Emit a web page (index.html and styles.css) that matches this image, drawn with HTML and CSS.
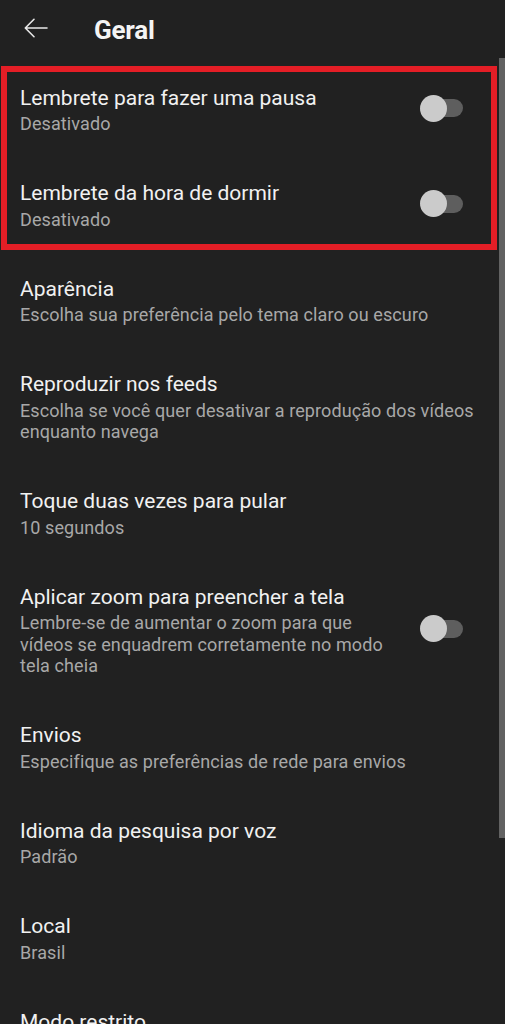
FILE: index.html
```html
<!DOCTYPE html>
<html lang="pt-BR">
<head>
<meta charset="utf-8">
<title>Geral</title>
<link rel="stylesheet" href="styles.css">
</head>
<body>
<div class="screen">
  <header class="appbar">
    <svg class="back" width="24" height="20" viewBox="0 0 24 20" aria-hidden="true">
      <path d="M23 10H1.5M10 1.3L1.3 10L10 18.7" fill="none" stroke="#e8e8e8" stroke-width="1.6" stroke-linecap="round" stroke-linejoin="round"/>
    </svg>
    <h1 class="title">Geral</h1>
  </header>

  <main class="list">
    <div class="highlight">
      <div class="item">
        <div class="text">
          <div class="label">Lembrete para fazer uma pausa</div>
          <div class="sub">Desativado</div>
        </div>
        <div class="switch"><span class="thumb"></span></div>
      </div>
      <div class="item">
        <div class="text">
          <div class="label">Lembrete da hora de dormir</div>
          <div class="sub">Desativado</div>
        </div>
        <div class="switch"><span class="thumb"></span></div>
      </div>
    </div>

    <div class="item">
      <div class="text">
        <div class="label">Aparência</div>
        <div class="sub">Escolha sua preferência pelo tema claro ou escuro</div>
      </div>
    </div>
    <div class="item">
      <div class="text">
        <div class="label">Reproduzir nos feeds</div>
        <div class="sub">Escolha se você quer desativar a reprodução dos vídeos enquanto navega</div>
      </div>
    </div>
    <div class="item">
      <div class="text">
        <div class="label">Toque duas vezes para pular</div>
        <div class="sub">10 segundos</div>
      </div>
    </div>
    <div class="item">
      <div class="text">
        <div class="label">Aplicar zoom para preencher a tela</div>
        <div class="sub">Lembre-se de aumentar o zoom para que vídeos se enquadrem corretamente no modo tela cheia</div>
      </div>
      <div class="switch"><span class="thumb"></span></div>
    </div>
    <div class="item">
      <div class="text">
        <div class="label">Envios</div>
        <div class="sub">Especifique as preferências de rede para envios</div>
      </div>
    </div>
    <div class="item">
      <div class="text">
        <div class="label">Idioma da pesquisa por voz</div>
        <div class="sub">Padrão</div>
      </div>
    </div>
    <div class="item">
      <div class="text">
        <div class="label">Local</div>
        <div class="sub">Brasil</div>
      </div>
    </div>
    <div class="item">
      <div class="text">
        <div class="label">Modo restrito</div>
        <div class="sub">Desativado</div>
      </div>
    </div>
  </main>

  <div class="scrollbar"></div>
</div>
</body>
</html>
```

FILE: styles.css
```css
* { box-sizing: border-box; }

html, body {
  margin: 0;
  padding: 0;
  background: #212121;
}

body {
  font-family: Roboto, "Noto Sans", "Liberation Sans", sans-serif;
  color: #f1f1f1;
  overflow: hidden;
}

.screen {
  position: relative;
  width: 505px;
  height: 1024px;
  overflow: hidden;
  background: #212121;
}

.appbar {
  height: 62px;
  display: flex;
  align-items: flex-start;
  padding: 18px 0 0 24px;
}

.back {
  display: block;
}

.title {
  margin: -6px 0 0 46px;
  font-size: 26px;
  line-height: 36px;
  font-weight: 700;
  color: #f4f4f4;
  letter-spacing: -0.2px;
}

.list {
  display: flex;
  flex-direction: column;
}

.highlight {
  position: relative;
  display: flex;
  flex-direction: column;
}

.highlight::after {
  content: "";
  position: absolute;
  left: 1px;
  right: 8px;
  top: 4px;
  bottom: 3px;
  border: 6px solid #e41e26;
  pointer-events: none;
}

.item {
  display: flex;
  align-items: center;
  padding: 22.5px 20px 23px 20px;
}

.text {
  flex: 1;
  min-width: 0;
}

.label {
  font-size: 21px;
  line-height: 26px;
  color: #f1f1f1;
}

.sub {
  margin-top: 2.5px;
  font-size: 18px;
  line-height: 21.5px;
  letter-spacing: 0.1px;
  color: #a8a8a8;
}

.switch {
  position: relative;
  flex: none;
  width: 43px;
  height: 27px;
  margin: -3px 22px 0 26px;
  display: flex;
  align-items: center;
}

.switch::before {
  content: "";
  position: absolute;
  right: 0;
  top: 4.5px;
  width: 36px;
  height: 18px;
  border-radius: 9px;
  background: #5e5e5e;
}

.thumb {
  position: relative;
  width: 27px;
  height: 27px;
  border-radius: 50%;
  background: #cbcbcb;
}

.scrollbar {
  position: absolute;
  right: 0;
  top: 58px;
  width: 6px;
  height: 780px;
  background: #626262;
}
```
